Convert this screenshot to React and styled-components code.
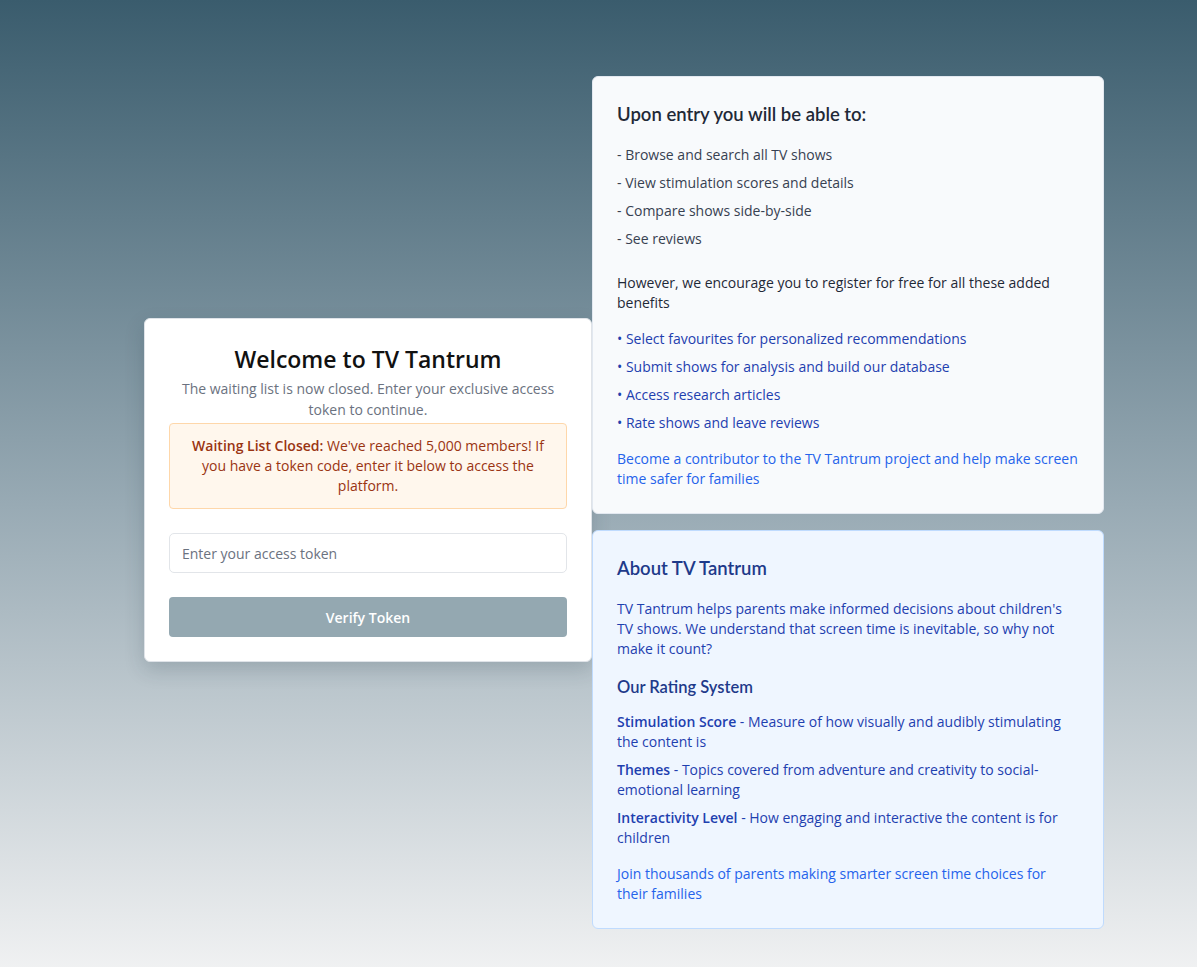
import styled, { createGlobalStyle } from "styled-components";

const GlobalStyle = createGlobalStyle`
  * { box-sizing: border-box; }
  body {
    margin: 0;
    font-family: "Open Sans", "Liberation Sans", sans-serif;
    color: #111827;
  }
`;

const Page = styled.div`
  min-height: 967px;
  background: linear-gradient(180deg, #3a5c6d 0%, #98aab4 52%, #f0f1f2 100%);
  padding: 76px 93px 40px 144px;
`;

const Layout = styled.div`
  display: flex;
  align-items: flex-start;
`;

const LoginCard = styled.div`
  width: 448px;
  margin-top: 242px;
  background: #ffffff;
  border: 1px solid #dfe3e8;
  border-radius: 6px;
  box-shadow: 0 8px 20px rgba(30, 50, 60, 0.18);
  padding: 24px;
  display: flex;
  flex-direction: column;
`;

const Title = styled.h1`
  margin: 0;
  text-align: center;
  font-size: 23px;
  line-height: 32px;
  font-weight: 600;
  color: #111111;
`;

const Subtitle = styled.p`
  margin: 3px 0 0;
  text-align: center;
  font-size: 14px;
  line-height: 21px;
  color: #6b7280;
`;

const Alert = styled.div`
  margin-top: 3px;
  padding: 12px 16px;
  background: #fff7ed;
  border: 1px solid #fed7aa;
  border-radius: 4px;
  text-align: center;
  font-size: 14px;
  line-height: 20px;
  color: #9a3412;

  strong { font-weight: 600; }
`;

const Input = styled.input`
  margin-top: 24px;
  height: 40px;
  border: 1px solid #e2e5e9;
  border-radius: 5px;
  padding: 0 12px;
  font-family: inherit;
  font-size: 14px;
  color: #111827;
  outline: none;

  &::placeholder { color: #6b7280; }
`;

const Button = styled.button`
  margin-top: 24px;
  height: 40px;
  border: none;
  border-radius: 4px;
  background: #94a8b1;
  color: #ffffff;
  font-family: inherit;
  font-size: 14px;
  font-weight: 600;
`;

const Column = styled.div`
  width: 512px;
  display: flex;
  flex-direction: column;
  gap: 16px;
`;

const InfoCard = styled.div`
  background: ${(p) => (p.$tint ? "#eff6ff" : "#f8fafc")};
  border: 1px solid ${(p) => (p.$tint ? "#bfdbfe" : "#e2e8f0")};
  border-radius: 6px;
  padding: 24px;
`;

const CardHeading = styled.h2`
  margin: 0;
  font-family: "Lato", "Open Sans", sans-serif;
  font-size: 18.5px;
  line-height: 26px;
  font-weight: 600;
  color: ${(p) => p.$color || "#1f2937"};
`;

const SubHeading = styled.h3`
  margin: 16px 0 0;
  font-family: "Lato", "Open Sans", sans-serif;
  font-size: 16.5px;
  line-height: 24px;
  font-weight: 600;
  color: #1e3a8a;
`;

const List = styled.ul`
  list-style: none;
  margin: ${(p) => p.$top || 0}px 0 0;
  padding: 0;
  display: flex;
  flex-direction: column;
  gap: 8px;
`;

const Item = styled.li`
  font-size: 14px;
  line-height: 20px;
  color: ${(p) => p.$color};
`;

const Text = styled.p`
  margin: ${(p) => p.$top || 0}px 0 0;
  font-size: 14px;
  line-height: 20px;
  color: ${(p) => p.$color};

  strong { font-weight: 600; }
`;

const features = [
  "- Browse and search all TV shows",
  "- View stimulation scores and details",
  "- Compare shows side-by-side",
  "- See reviews",
];

const benefits = [
  "• Select favourites for personalized recommendations",
  "• Submit shows for analysis and build our database",
  "• Access research articles",
  "• Rate shows and leave reviews",
];

const ratings = [
  ["Stimulation Score", "Measure of how visually and audibly stimulating the content is"],
  ["Themes", "Topics covered from adventure and creativity to social-emotional learning"],
  ["Interactivity Level", "How engaging and interactive the content is for children"],
];

export default function App() {
  return (
    <>
      <GlobalStyle />
      <Page>
        <Layout>
          <LoginCard>
            <Title>Welcome to TV Tantrum</Title>
            <Subtitle>
              The waiting list is now closed. Enter your exclusive access token to continue.
            </Subtitle>
            <Alert>
              <strong>Waiting List Closed:</strong> We've reached 5,000 members! If you have a
              token code, enter it below to access the platform.
            </Alert>
            <Input placeholder="Enter your access token" />
            <Button>Verify Token</Button>
          </LoginCard>

          <Column>
            <InfoCard>
              <CardHeading>Upon entry you will be able to:</CardHeading>
              <List $top={18}>
                {features.map((f) => (
                  <Item key={f} $color="#374151">{f}</Item>
                ))}
              </List>
              <Text $top={24} $color="#1f2937">
                However, we encourage you to register for free for all these added benefits
              </Text>
              <List $top={16}>
                {benefits.map((b) => (
                  <Item key={b} $color="#1e40af">{b}</Item>
                ))}
              </List>
              <Text $top={16} $color="#2563eb">
                Become a contributor to the TV Tantrum project and help make screen time safer for
                families
              </Text>
            </InfoCard>

            <InfoCard $tint>
              <CardHeading $color="#1e3a8a">About TV Tantrum</CardHeading>
              <Text $top={18} $color="#1e40af">
                TV Tantrum helps parents make informed decisions about children's TV shows. We
                understand that screen time is inevitable, so why not make it count?
              </Text>
              <SubHeading>Our Rating System</SubHeading>
              <List $top={13}>
                {ratings.map(([label, desc]) => (
                  <Text key={label} $color="#1e40af">
                    <strong>{label}</strong> - {desc}
                  </Text>
                ))}
              </List>
              <Text $top={16} $color="#2563eb">
                Join thousands of parents making smarter screen time choices for their families
              </Text>
            </InfoCard>
          </Column>
        </Layout>
      </Page>
    </>
  );
}
